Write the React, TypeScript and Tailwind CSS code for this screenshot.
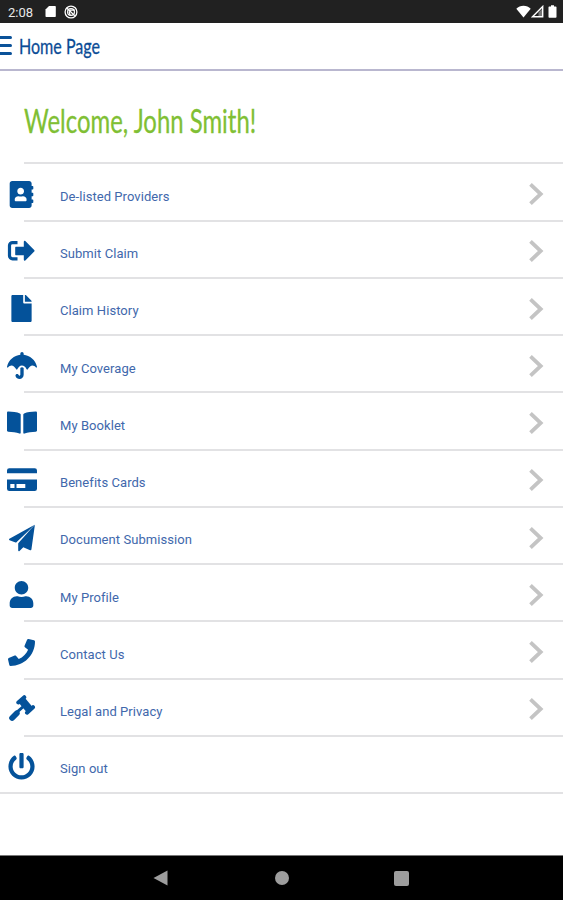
import type { ReactNode } from "react";
import {
  FaAddressBook,
  FaFile,
  FaPhone,
  FaPowerOff,
  FaUmbrella,
  FaUser,
} from "react-icons/fa";

type MenuItem = {
  label: string;
  icon: ReactNode;
  last?: boolean;
};

// 30x28 box shared by the hand drawn menu icons
function Glyph({ children }: { children: ReactNode }) {
  return (
    <svg viewBox="0 0 30 28" className="h-7 w-[30px]" fill="currentColor">
      {children}
    </svg>
  );
}

const submitIcon = (
  <Glyph>
    <path d="M10.500 5.600H5.500a3 3 0 0 0-3 3v10.200a3 3 0 0 0 3 3h5" fill="none" stroke="currentColor" strokeWidth="3.200" />
    <path d="M9.200 9.800h7.600V4.800c0-.9.9-1.200 1.500-.7l8.900 8.900c.5.500.5 1.100 0 1.600l-8.900 8.900c-.6.500-1.500.2-1.500-.7v-4.600H9.200c-.7 0-1-.4-1-1v-6.400c0-.6.3-1 1-1z" />
  </Glyph>
);

const bookIcon = (
  <Glyph>
    <path d="M0 3.800c0-.8.6-1.300 1.400-1.200 4.200.2 8.500.7 11.500 1.800.5.200.8.500.8 1v18.400c0 .7-.6 1-1.200.8-3.200-1.100-7.400-1.600-11.300-1.800-.7 0-1.200-.6-1.200-1.200z" />
    <path d="M30 3.800c0-.8-.6-1.300-1.400-1.200-4.200.2-8.500.7-11.500 1.800-.5.200-.8.500-.8 1v18.400c0 .7.6 1 1.200.8 3.200-1.100 7.400-1.600 11.300-1.800.7 0 1.200-.6 1.200-1.200z" />
  </Glyph>
);

const cardIcon = (
  <Glyph>
    <path d="M2.300 2.200h25.400A2.300 2.300 0 0 1 30 4.500v2.700H0V4.500a2.300 2.300 0 0 1 2.300-2.300z" />
    <path
      fillRule="evenodd"
      d="M0 13.500h30v9.300a2.300 2.300 0 0 1-2.300 2.300H2.300A2.300 2.300 0 0 1 0 22.800zM3.300 18v4h4.200v-4zM9.500 18v4h8.800v-4z"
    />
  </Glyph>
);

const planeIcon = (
  <Glyph>
    <path d="M27.700.7 2.400 14.800c-.6.400-.5 1.100.1 1.400l6.800 2.600z" />
    <path d="M27.900.8 11.200 18.200v8.200c0 .8.800 1.100 1.300.5l3.800-3.700 6.800 3c.6.300 1.200 0 1.300-.6z" />
    <path d="M9 18.700 23.500 5.500 11.200 19.200z" fill="#fff" />
  </Glyph>
);

const gavelIcon = (
  <Glyph>
    <g fill="none" stroke="currentColor" strokeLinecap="round">
      <path d="M11.300 7.500 17.300 2.200M20 17.700l6-5.500" strokeWidth="4" />
      <path d="M14.500 5 22.500 14.500" strokeWidth="8" strokeLinecap="butt" />
      <path d="M17.500 10.500 10 17.200" strokeWidth="3" />
      <path d="M9.800 18.300 5.100 23" strokeWidth="5.800" />
    </g>
  </Glyph>
);

const menuItems: MenuItem[] = [
  { label: "De-listed Providers", icon: <FaAddressBook className="size-[27px]" /> },
  { label: "Submit Claim", icon: submitIcon },
  { label: "Claim History", icon: <FaFile className="size-[27px]" /> },
  { label: "My Coverage", icon: <FaUmbrella className="h-[27px] w-[30px]" preserveAspectRatio="none" /> },
  { label: "My Booklet", icon: bookIcon },
  { label: "Benefits Cards", icon: cardIcon },
  { label: "Document Submission", icon: planeIcon },
  { label: "My Profile", icon: <FaUser className="size-[27px]" /> },
  { label: "Contact Us", icon: <FaPhone className="size-[27px]" /> },
  { label: "Legal and Privacy", icon: gavelIcon },
  { label: "Sign out", icon: <FaPowerOff className="size-[27px]" />, last: true },
];

function StatusBar() {
  return (
    <div className="flex h-[23px] shrink-0 items-center bg-[#212121] pl-2 pr-[6px] text-white">
      <span className="mt-[2px] w-[37px] text-[13px] leading-none text-[#e8e8e8]">2:08</span>
      {/* sd card */}
      <svg viewBox="0 0 11 13" className="h-[13px] w-[11px]" fill="currentColor">
        <path d="M4 1h6a.8.8 0 0 1 .8.8v9.400a.8.8 0 0 1-.8.8H1.300a.8.8 0 0 1-.8-.8V4.600z" />
      </svg>
      <svg viewBox="0 0 14 14" className="ml-2 size-[14px]" fill="none" stroke="currentColor">
        <circle cx="7" cy="7" r="5.900" strokeWidth="1.300" />
        <circle cx="7" cy="7" r="3.400" strokeWidth="1.200" />
        <path d="M3 3.200l7.800 7.600M6 5.200h4.800M5 6.500l1.300 4" strokeWidth="1.200" />
      </svg>
      <div className="ml-auto flex items-center">
        <svg viewBox="0 0 15 13" className="-mr-[1px] h-[13px] w-[15px]" fill="currentColor">
          <path d="M7.500 12.600L.3 3.700C2.200 1.900 4.700.8 7.500.8s5.300 1.100 7.200 2.900z" />
        </svg>
        <svg viewBox="0 0 13 13" className="ml-[1px] mr-1 size-[13px]" fill="none" stroke="currentColor">
          <path d="M11.700 1.500v10.300H1.500z" strokeWidth="1.400" />
          <path d="M11 4v7H7.500V7.500z" fill="currentColor" stroke="none" opacity=".4" />
        </svg>
        <svg viewBox="0 0 9 13" className="h-[13px] w-[9px]" fill="currentColor">
          <path d="M3 .3h3v1.200h1.700a.8.8 0 0 1 .8.8v9.600a.8.8 0 0 1-.8.8H1.300a.8.8 0 0 1-.8-.8V2.300a.8.8 0 0 1 .8-.8H3z" />
        </svg>
      </div>
    </div>
  );
}

function Header() {
  return (
    <header className="flex h-12 shrink-0 items-center border-b-2 border-[#b9b7cf]">
      <button aria-label="Menu" className="-mt-[2px] flex w-[12px] flex-col gap-[5px]">
        <span className="h-[3px] rounded-r-sm bg-[#0b5299]" />
        <span className="h-[3px] rounded-r-sm bg-[#0b5299]" />
        <span className="h-[3px] rounded-r-sm bg-[#0b5299]" />
      </button>
      <h1 className="ml-[7px] origin-left scale-x-[0.73] whitespace-nowrap font-[Lato,sans-serif] text-[22px] leading-none text-[#0b4c96] [-webkit-text-stroke:0.3px]">
        Home Page
      </h1>
    </header>
  );
}

function MenuRow({ label, icon, last }: MenuItem) {
  return (
    <li className="flex h-[57.25px] flex-col">
      <a className="flex flex-1 items-center pt-[4px]">
        <span className="flex w-[43px] justify-center text-[#04529a]">{icon}</span>
        <span className="ml-[17px] mt-[5px] flex-1 text-[13px] tracking-[0.06px] text-[#4168ac]">
          {label}
        </span>
        {!last && (
          <svg viewBox="0 0 16 24" className="mr-[19px] h-6 w-4" fill="none" stroke="#c4c4c4" strokeWidth="3.800">
            <path d="M2.500 2.300L12.700 12 2.500 21.700" />
          </svg>
        )}
      </a>
      <div className={last ? "h-[2px] bg-[#e2e2e4]" : "ml-6 h-[2px] bg-[#e2e2e4]"} />
    </li>
  );
}

function NavBar() {
  return (
    <nav className="flex h-[45px] shrink-0 items-center border-t border-[#777] bg-black pl-[153px] text-[#9d9d9d]">
      <svg viewBox="0 0 15 16" className="h-4 w-[15px]" fill="currentColor">
        <path d="M14.500 .5v15L.5 8z" />
      </svg>
      <span className="ml-[107px] size-[14px] rounded-full bg-[#9d9d9d]" />
      <span className="ml-[105px] size-[15px] rounded-[2px] bg-[#9d9d9d]" />
    </nav>
  );
}

export default function App() {
  return (
    <div className="flex h-screen flex-col overflow-hidden bg-white font-[Roboto,sans-serif]">
      <StatusBar />
      <Header />
      <main className="flex-1">
        <div className="flex h-[91px] items-center pl-6 pt-[8px]">
          <h2 className="origin-left scale-x-[0.725] whitespace-nowrap font-[Lato,sans-serif] text-[33px] leading-none text-[#80bf34] [-webkit-text-stroke:0.3px]">
            Welcome, John Smith!
          </h2>
        </div>
        <div className="ml-6 h-[2px] bg-[#e2e2e4]" />
        <ul className="pt-[0.4px]">
          {menuItems.map((item) => (
            <MenuRow key={item.label} {...item} />
          ))}
        </ul>
      </main>
      <NavBar />
    </div>
  );
}
